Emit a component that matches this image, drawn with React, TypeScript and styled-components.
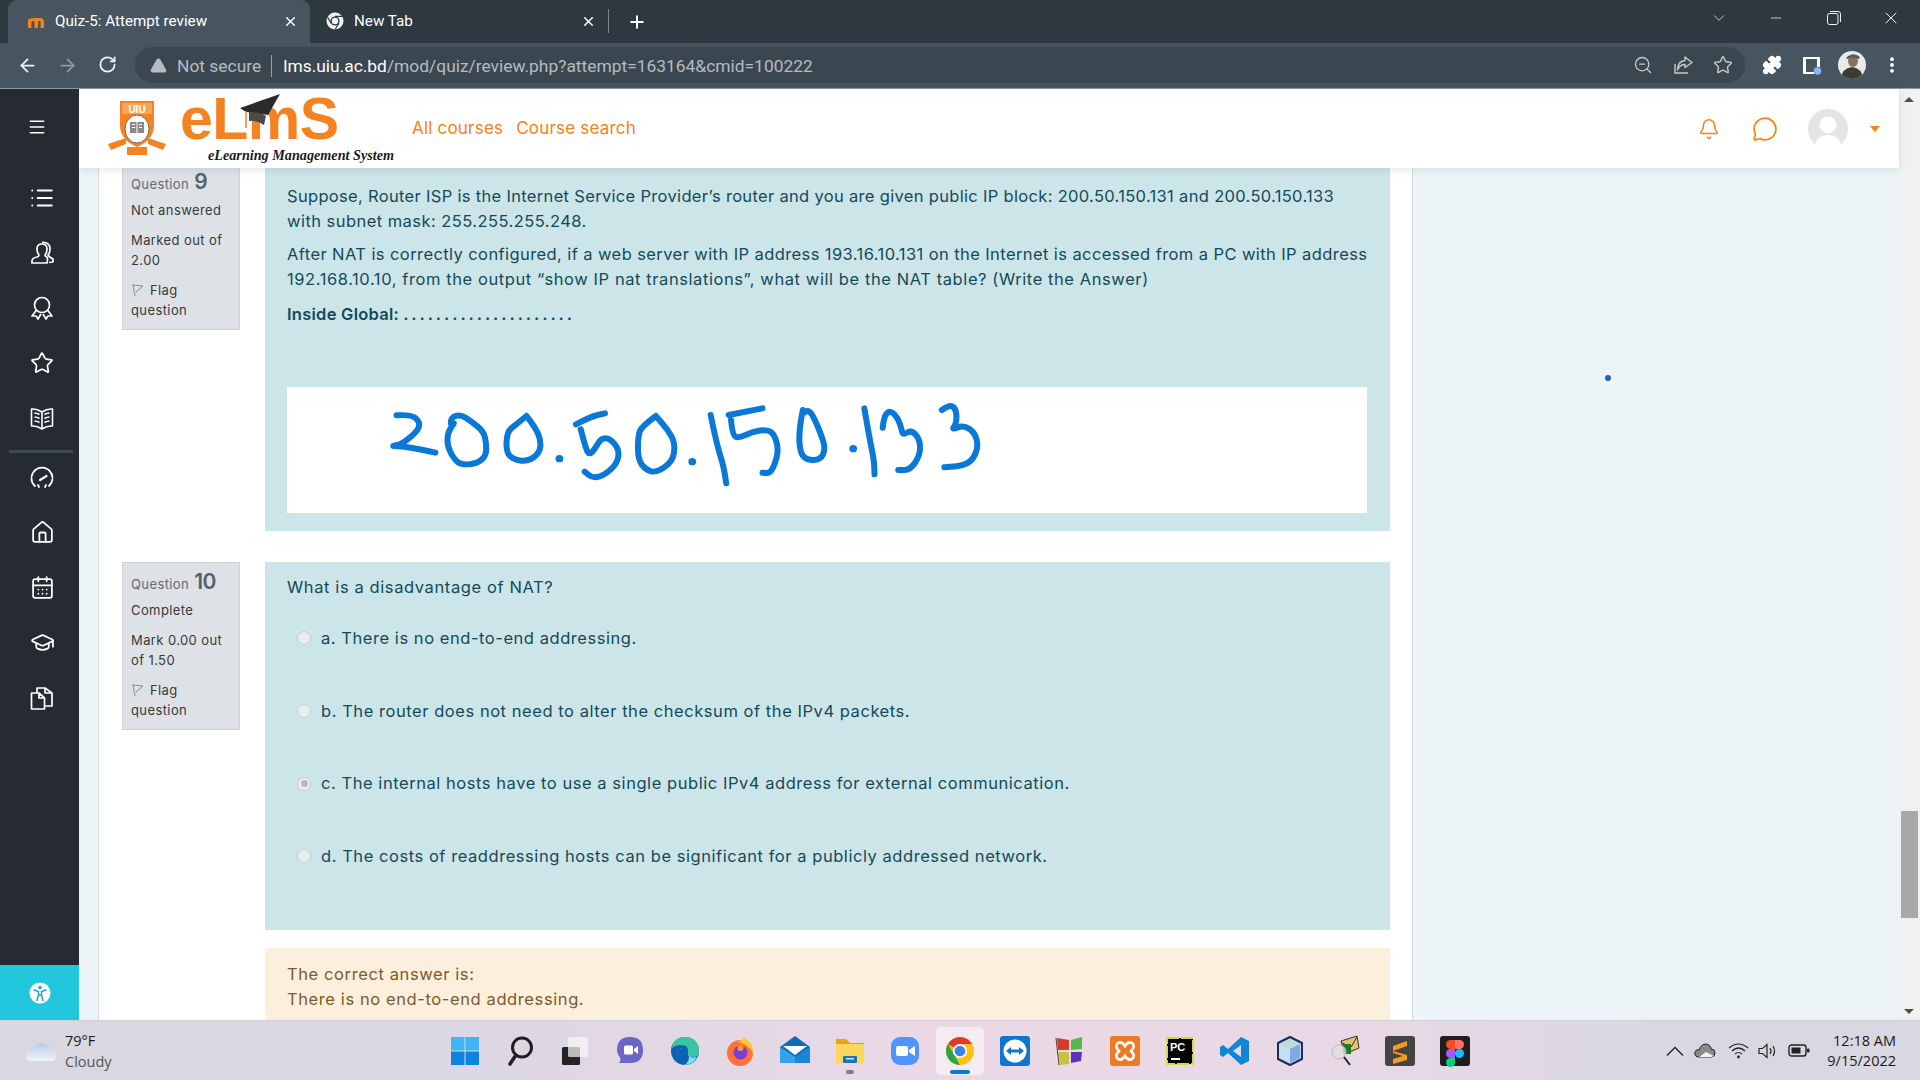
import styled, { createGlobalStyle } from 'styled-components';
import {
  ArrowLeft,
  ArrowRight,
  AlertTriangle,
  Bell,
  CalendarDays,
  ChevronDown,
  EllipsisVertical,
  GraduationCap,
  House,
  List,
  Menu,
  MessageCircle,
  Minus,
  Plus,
  Puzzle,
  RotateCw,
  Star,
  X,
  ZoomOut,
} from 'lucide-react';
import type { ReactNode } from 'react';

const GlobalStyle = createGlobalStyle`
  html, body { margin: 0; padding: 0; height: 100%; overflow: hidden; }
  * { box-sizing: border-box; }
  body { font-family: Inter, "Noto Sans", sans-serif; }
`;

const Screen = styled.div`
  width: 1920px;
  height: 1080px;
  display: flex;
  flex-direction: column;
  overflow: hidden;
`;

/* browser chrome */
const TabStrip = styled.div`
  height: 43px;
  background: #2e383f;
  display: flex;
  align-items: flex-end;
  padding-left: 8px;
  color: #fff;
  font: 15.2px Roboto, sans-serif;
`;

const Tab = styled.div<{ $active?: boolean }>`
  width: ${p => (p.$active ? 302 : 298)}px;
  height: 43px;
  border-radius: 9px 9px 0 0;
  background: ${p => (p.$active ? '#46555f' : 'transparent')};
  display: flex;
  align-items: center;
  padding: 0 0 1px ${p => (p.$active ? 19 : 16)}px;
  gap: 10px;
`;

const TabTitle = styled.span`
  flex: 1;
  white-space: nowrap;
`;

const TabClose = styled(X)`
  width: 15px;
  height: 15px;
  margin-right: 12px;
  stroke-width: 2.4;
`;

const TabDivider = styled.div`
  width: 1px;
  height: 24px;
  background: #7b868d;
  margin: 0 0 10px 0;
`;

const NewTab = styled(Plus)`
  width: 20px;
  height: 20px;
  margin: 0 0 11px 18px;
  stroke-width: 2.4;
`;

const WindowButtons = styled.div`
  margin-left: auto;
  height: 36px;
  align-self: flex-start;
  display: flex;
  align-items: center;
`;

const WindowButton = styled.div`
  width: 57.5px;
  display: flex;
  justify-content: center;
  color: #f1f3f4;
`;

const Toolbar = styled.div`
  height: 46px;
  background: #46555f;
  border-bottom: 1px solid #8b969c;
  display: flex;
  align-items: center;
  padding: 0 0 1px 0;
  color: #f1f3f4;
`;

const NavButton = styled.div<{ $dim?: boolean; $width: number }>`
  width: ${p => p.$width}px;
  display: flex;
  justify-content: center;
  color: ${p => (p.$dim ? '#8f9ba3' : '#f1f3f4')};
`;

const NavGroup = styled.div`
  width: 135px;
  display: flex;
  padding-left: 7px;
`;

const Omnibox = styled.div`
  width: 1610px;
  height: 36px;
  border-radius: 18px;
  background: #3a4750;
  display: flex;
  align-items: center;
  padding: 0 0 0 15px;
  font: 17.4px Roboto, sans-serif;
  white-space: nowrap;
`;

const OmniText = styled.div`
  display: flex;
  align-items: center;
  padding-top: 2px;
`;

const NotSecure = styled.span`
  color: #b4bcc2;
  margin-left: 10px;
`;

const OmniDivider = styled.div`
  width: 1px;
  height: 22px;
  background: #97a1a7;
  margin: 0 11px 0 10px;
`;

const Host = styled.span`
  color: #fff;
`;

const UrlPath = styled.span`
  color: #b4bcc2;
`;

const OmniActions = styled.div`
  margin-left: auto;
  display: flex;
  padding-right: 2px;
  color: #c4cacd;
`;

const OmniAction = styled.div`
  width: 40px;
  display: flex;
  justify-content: center;
`;

const ToolActions = styled.div`
  display: flex;
  align-items: center;
  padding-left: 7px;
`;

const ToolAction = styled.div`
  width: 40px;
  display: flex;
  justify-content: center;
  align-items: center;
  color: #fff;
`;

/* page */
const Body = styled.div`
  flex: 1;
  min-height: 0;
  display: flex;
`;

const Sidebar = styled.aside`
  width: 79px;
  background: #262b33;
  display: flex;
  flex-direction: column;
  color: #fff;
  flex: none;
`;

const Burger = styled.div`
  height: 81px;
  display: flex;
  align-items: center;
  padding: 0 0 6px 27px;
  flex: none;
`;

const SideItem = styled.div`
  height: 55px;
  display: flex;
  align-items: center;
  justify-content: center;
  padding-left: 5px;
  flex: none;
`;

const SideDivider = styled.div`
  height: 3px;
  margin: 5px 6px -3px 9px;
  background: #3b4a54;
  flex: none;
`;

const AccessButton = styled.div`
  margin-top: auto;
  height: 55px;
  background: #22c7dd;
  display: flex;
  align-items: center;
  justify-content: center;
`;

const Main = styled.div`
  flex: 1;
  min-width: 0;
  display: flex;
  flex-direction: column;
`;

const Header = styled.header`
  height: 79px;
  background: #fff;
  display: flex;
  align-items: center;
  padding-left: 28px;
  box-shadow: 0 2px 8px rgba(40, 60, 80, 0.12);
  position: relative;
  z-index: 2;
  flex: none;
`;

const LogoBlock = styled.div`
  width: 305px;
  height: 79px;
  display: flex;
  position: relative;
  flex: none;
`;

const Emblem = styled.div`
  width: 73px;
  padding-top: 11px;
  flex: none;
`;

const LogoText = styled.div`
  display: flex;
  flex-direction: column;
`;

const Wordmark = styled.div`
  font: 700 59px/1 "Liberation Sans", sans-serif;
  color: #f58220;
  height: 58px;
  margin-top: 1px;
  letter-spacing: -0.5px;
`;

const Tagline = styled.div`
  font: italic 700 14.2px/1 "Liberation Serif", serif;
  color: #1a1a1a;
  margin: 0 0 0 28px;
  white-space: nowrap;
`;

const CapMark = styled.svg`
  position: absolute;
  left: 131px;
  top: 5px;
`;

const NavLinks = styled.nav`
  display: flex;
  gap: 13px;
  font-size: 17px;
  letter-spacing: 0.2px;
  color: #f98012;
  padding-bottom: 1px;
`;

const HeaderActions = styled.div`
  margin-left: auto;
  display: flex;
  align-items: center;
  color: #f98012;
  padding-right: 19px;
`;

const HeaderIcon = styled.div<{ $width: number }>`
  width: ${p => p.$width}px;
  display: flex;
  justify-content: center;
`;

const Caret = styled.div`
  width: 0;
  height: 0;
  margin-left: 7px;
  border-left: 5px solid transparent;
  border-right: 5px solid transparent;
  border-top: 6px solid #f98012;
`;

const Viewport = styled.div`
  flex: 1;
  min-height: 0;
  display: flex;
  overflow: hidden;
`;

const PageBg = styled.div`
  flex: 1;
  min-width: 0;
  background: #ecf4f7;
  padding-left: 19px;
  position: relative;
  overflow: hidden;
`;

const PointerDot = styled.div`
  position: absolute;
  left: 1526px;
  top: 207px;
  width: 6px;
  height: 6px;
  border-radius: 50%;
  background: #1565c0;
`;

const Card = styled.div`
  width: 1315px;
  min-height: 100%;
  background: #fff;
  border-left: 1px solid #d5dde2;
  border-right: 1px solid #d5dde2;
  padding: 0 22px 0 23px;
  margin-top: -6px;
`;

const Question = styled.section`
  display: flex;
  gap: 25px;
  margin-bottom: 31px;
  align-items: flex-start;
`;

const Info = styled.div`
  width: 118px;
  flex: none;
  background: #dee2e6;
  border: 1px solid #ced4da;
  padding: 9px 8px 9px 8px;
  font-size: 13px;
  line-height: 20px;
  letter-spacing: 0.4px;
  color: #373a3c;
`;

const QuestionNo = styled.div`
  display: flex;
  align-items: baseline;
  gap: 5px;
  color: #5f6b73;
  height: 24px;
  margin-bottom: 4px;
`;

const QuestionNumber = styled.span`
  font-size: 21px;
  font-weight: 600;
  color: #55606a;
  letter-spacing: -0.5px;
`;

const InfoLine = styled.div`
  margin-bottom: 10px;
`;

const FlagRow = styled.div`
  svg {
    margin: 0 6px -2px 0;
  }
`;

const Answers = styled.div`
  flex: 1;
  min-width: 0;
  display: flex;
  flex-direction: column;
  gap: 18px;
`;

const Formulation = styled.div<{ $top: number }>`
  background: #cce5e9;
  color: #144a58;
  padding: ${p => p.$top}px 23px 18px 22px;
  font-size: 16.5px;
  line-height: 25px;
`;

const Para = styled.div`
  margin: 0 0 8px;
`;

const TextLine = styled.div<{ $spacing: number }>`
  white-space: nowrap;
  letter-spacing: ${p => p.$spacing}px;
`;

const Strong = styled.div`
  margin: 10px 0 0;
  font-weight: 600;
  letter-spacing: 0.26px;
`;

const LeaderDots = styled.span`
  letter-spacing: -0.45px;
  margin-left: 4px;
`;

const Sketch = styled.div`
  margin-top: 60px;
  height: 126px;
  background: #fff;
`;

const Options = styled.div`
  margin-top: 2px;
  padding-bottom: 19px;
`;

const Option = styled.div`
  height: 72.7px;
  display: flex;
  align-items: center;
  padding-left: 10px;
  gap: 10px;
  letter-spacing: 0.55px;
`;

const Radio = styled.span<{ $checked?: boolean }>`
  width: 14px;
  height: 14px;
  border-radius: 50%;
  background: #e9eef0;
  border: 1px solid #c6cdd0;
  display: flex;
  align-items: center;
  justify-content: center;
  flex: none;
  &::after {
    content: '';
    width: 7px;
    height: 7px;
    border-radius: 50%;
    background: ${p => (p.$checked ? '#b5bdc0' : 'transparent')};
  }
`;

const Outcome = styled.div`
  background: #fcefdc;
  color: #7d5a29;
  padding: 14px 22px 40px;
  font-size: 16.5px;
  line-height: 25px;
  letter-spacing: 0.6px;
`;

const Scrollbar = styled.div`
  width: 21px;
  background: #f1f1f1;
  flex: none;
  position: relative;
`;

const ScrollArrow = styled.div<{ $down?: boolean }>`
  position: absolute;
  left: 5px;
  ${p => (p.$down ? 'bottom: 6px;' : 'top: 8px;')}
  width: 0;
  height: 0;
  border-left: 5px solid transparent;
  border-right: 5px solid transparent;
  ${p => (p.$down ? 'border-top: 5px solid #505050;' : 'border-bottom: 5px solid #505050;')}
`;

const ScrollThumb = styled.div`
  position: absolute;
  left: 2px;
  top: 722px;
  width: 17px;
  height: 107px;
  background: #a8a8a8;
`;

/* taskbar */
const Taskbar = styled.footer`
  height: 60px;
  flex: none;
  display: grid;
  grid-template-columns: 1fr auto 1fr;
  align-items: center;
  background: linear-gradient(90deg, #d9d7df 0%, #dcd7e3 25%, #ebd8e5 50%, #e8d8e5 72%, #d9d8e2 86%, #d9d8e2 100%);
  border-top: 1px solid #d2d0d8;
  color: #1a1a1a;
  font: 14.5px "Open Sans", sans-serif;
`;

const Weather = styled.div`
  display: flex;
  align-items: center;
  gap: 8px;
  padding-left: 25px;
  line-height: 21px;
`;

const WeatherState = styled.div`
  color: #555;
`;

const TaskIcons = styled.div`
  display: flex;
`;

const TaskSlot = styled.div<{ $active?: boolean }>`
  width: 55px;
  height: 48px;
  display: flex;
  align-items: center;
  justify-content: center;
  position: relative;
  &::before {
    content: '';
    position: absolute;
    left: 3.5px;
    right: 3.5px;
    top: 0;
    bottom: 0;
    border-radius: 5px;
    background: ${p => (p.$active ? 'rgba(255, 255, 255, 0.5)' : 'transparent')};
  }
  svg {
    position: relative;
  }
`;

const RunDot = styled.span<{ $active?: boolean }>`
  position: absolute;
  bottom: 1px;
  left: 50%;
  transform: translateX(-50%);
  height: 4px;
  border-radius: 2px;
  width: ${p => (p.$active ? 20 : 8)}px;
  background: ${p => (p.$active ? '#0a78d4' : '#7d7a80')};
`;

const Tray = styled.div`
  display: flex;
  align-items: center;
  justify-content: flex-end;
  padding-right: 24px;
`;

const TrayIcon = styled.div<{ $width: number }>`
  width: ${p => p.$width}px;
  display: flex;
  justify-content: center;
`;

const Clock = styled.div`
  width: 78px;
  text-align: right;
  line-height: 20px;
  white-space: nowrap;
`;

/* hand written answer, coordinates follow the pen strokes */
const strokes: number[][][] = [
  [[240, 106], [270, 103], [288, 125], [285, 150], [262, 180], [245, 195], [228, 198], [255, 200], [290, 208], [320, 218]],
  [[352, 130], [352, 112], [372, 103], [395, 125], [420, 155], [425, 190], [425, 225], [408, 250], [375, 255], [360, 240], [345, 200], [345, 160], [358, 130]],
  [[508, 108], [485, 135], [468, 155], [466, 215], [480, 238], [510, 245], [535, 220], [538, 180], [525, 140], [508, 108]],
  [[610, 133], [640, 110], [670, 100]],
  [[620, 148], [630, 205], [638, 225], [650, 205], [662, 175], [680, 175], [700, 210], [695, 250], [670, 285], [645, 295], [628, 275]],
  [[775, 108], [745, 140], [738, 170], [738, 240], [755, 270], [775, 278], [810, 245], [815, 190], [800, 150], [775, 108]],
  [[888, 105], [900, 190], [915, 260], [920, 310]],
  [[925, 105], [995, 85]],
  [[930, 120], [933, 165], [945, 175], [975, 155], [1005, 148], [1020, 165], [1028, 210], [1020, 255], [1010, 280], [995, 278]],
  [[1078, 90], [1070, 150], [1072, 215], [1085, 240], [1115, 240], [1125, 205], [1115, 160], [1100, 110], [1090, 90], [1078, 100]],
  [[1205, 85], [1215, 170], [1225, 240], [1226, 283]],
  [[1243, 143], [1245, 110], [1258, 90], [1275, 115], [1282, 150], [1285, 165], [1303, 150], [1320, 180], [1320, 225], [1300, 270], [1275, 270]],
  [[1365, 90], [1382, 72], [1395, 90], [1395, 130], [1385, 150], [1410, 135], [1435, 160], [1440, 210], [1420, 255], [1370, 262]],
];
const penDots = [[576, 236], [850, 245], [1182, 206]];

const smooth = (pts: number[][]) => {
  let d = `M${pts[0][0]} ${pts[0][1]}`;
  for (let i = 1; i < pts.length - 1; i++) {
    const mx = (pts[i][0] + pts[i + 1][0]) / 2;
    const my = (pts[i][1] + pts[i + 1][1]) / 2;
    d += ` Q${pts[i][0]} ${pts[i][1]} ${mx} ${my}`;
  }
  const last = pts[pts.length - 1];
  return `${d} L${last[0]} ${last[1]}`;
};

const HandWriting = () => (
  <svg width="1080" height="126" viewBox="14 21 2228 378" preserveAspectRatio="none">
    <g fill="none" stroke="#0a78d7" strokeLinecap="round" strokeLinejoin="round">
      {strokes.map((pts, i) => (
        <path key={i} d={smooth(pts)} strokeWidth="6" vectorEffect="non-scaling-stroke" />
      ))}
    </g>
    {penDots.map(([x, y]) => (
      <ellipse key={x} cx={x} cy={y} rx="8" ry="11" fill="#0a78d7" />
    ))}
  </svg>
);

/* small drawings */
const Cap = () => (
  <CapMark width="46" height="36" viewBox="0 0 46 36">
    <path d="M2 14 L42 0 L30 21 Q18 19 8 18 Z" fill="#2b2b2b" />
    <path d="M11 18 Q22 18 28 22 L26 31 Q18 26 11 27 Z" fill="#4a4a4a" />
    <path d="M8 17 L8 34" stroke="#f58220" strokeWidth="1.5" />
  </CapMark>
);

const Shield = () => (
  <svg width="60" height="56" viewBox="0 0 60 56">
    <path d="M13 1 H47 V25 Q47 40 30 47 Q13 40 13 25 Z" fill="#f58220" />
    <rect x="15" y="3" width="30" height="11" fill="#f9a65a" />
    <text x="30" y="12.5" textAnchor="middle" fontFamily="Liberation Sans" fontWeight="700" fontSize="10" fill="#fff">UIU</text>
    <ellipse cx="30" cy="29" rx="12" ry="14" fill="#fff" stroke="#7d6a50" />
    <rect x="23" y="22" width="14" height="11" fill="#8a8a8a" />
    <path d="M30 22 V33 M25 24.5 H28 M25 27.5 H28 M32 24.5 H35 M32 27.5 H35" stroke="#fff" />
    <path d="M1 44 L19 38 L19 44 L4 50 Z M59 44 L41 38 L41 44 L56 50 Z" fill="#f58220" />
    <rect x="20" y="47" width="20" height="8" fill="#f58220" />
  </svg>
);

const MoodleFav = () => (
  <svg width="18" height="16" viewBox="0 0 18 16">
    <path d="M1 15 V8 Q1 5 4 5 H13 Q17 5 17 9 V15 H13.5 V9 Q13.5 8 12.5 8 Q11 8 11 9 V15 H7.5 V9 Q7.5 8 6.5 8 Q4.5 8 4.5 9 V15 Z" fill="#f98012" />
    <path d="M0 6 L8 1 L9 5 Z" fill="#555" />
  </svg>
);

const ChromeMono = () => (
  <svg width="18" height="18" viewBox="0 0 18 18">
    <circle cx="9" cy="9" r="8.5" fill="#f1f3f4" />
    <circle cx="9" cy="9" r="4.6" fill="#2e383f" />
    <circle cx="9" cy="9" r="3.2" fill="#f1f3f4" />
    <path d="M9 4.4 H17 M5 11.2 L1.5 5 M13 11.2 L9 17.5" stroke="#2e383f" strokeWidth="1.2" />
  </svg>
);

const Restore = () => (
  <svg width="14" height="14" viewBox="0 0 14 14" fill="none" stroke="currentColor" strokeWidth="1">
    <rect x="0.5" y="2.5" width="10.5" height="11" rx="2" />
    <path d="M3 .5 H11 Q13.5 .5 13.5 3 V11" />
  </svg>
);

const ShareBox = () => (
  <svg width="20" height="20" viewBox="0 0 20 20" fill="none" stroke="currentColor" strokeWidth="1.4">
    <path d="M2 9 V18 H15" />
    <path d="M12 2 L19 7.5 L12 12.5 V9.5 Q7 9.5 4.5 15 Q5 6 12 5.5 Z" strokeLinejoin="round" />
  </svg>
);

const SidePanel = () => (
  <svg width="20" height="20" viewBox="0 0 20 20">
    <path d="M1 2 H18 V12 H15 V4 H4 V17 H12 V19 H1 Z" fill="#fff" />
    <path d="M15 2 H18 V12 H15 Z" fill="#fff" />
    <circle cx="15.5" cy="16" r="3.8" fill="#8ab4f8" />
  </svg>
);

const ProfilePhoto = () => (
  <svg width="28" height="28" viewBox="0 0 28 28">
    <defs>
      <clipPath id="profile-clip">
        <circle cx="14" cy="14" r="14" />
      </clipPath>
    </defs>
    <g clipPath="url(#profile-clip)">
      <rect width="28" height="28" fill="#e9eaea" />
      <path d="M3 28 Q4 17 14 16 Q24 17 25 28 Z" fill="#3a3b33" />
      <ellipse cx="15" cy="10" rx="5" ry="6" fill="#8c6d5e" />
      <path d="M8 7 Q15 0 22 6 L21 8 Q15 5 9 8 Z" fill="#525a66" />
    </g>
  </svg>
);

const UserAvatar = () => (
  <svg width="40" height="40" viewBox="0 0 40 40">
    <circle cx="20" cy="20" r="20" fill="#e4e4e4" />
    <circle cx="20" cy="16" r="8.5" fill="#fff" />
    <path d="M6 40 Q8 26 20 26 Q32 26 34 40 Z" fill="#fff" />
  </svg>
);

const Friends = () => (
  <svg width="24" height="24" viewBox="0 0 24 24" fill="none" stroke="currentColor" strokeWidth="1.7" strokeLinejoin="round">
    <path d="M2 22 V20 Q2 17 7 16 Q9 15.5 9 14 Q7 12 7 8 Q7 3 12 3 Q17 3 17 8 Q17 12 15 14 Q15 15.5 17 16 Q18 18 17 22 Z" />
    <path d="M12 1.5 Q20 1 20 8 Q20 12 18 14 Q19 16 23 18 V21 L19 21.5" />
  </svg>
);

const Ribbon = () => (
  <svg width="24" height="24" viewBox="0 0 24 24" fill="none" stroke="currentColor" strokeWidth="1.7" strokeLinejoin="round">
    <circle cx="12" cy="9" r="7.5" />
    <path d="M6.5 14 L2 20 H6 L8 23 L11 18 M17.5 14 L22 20 H18 L16 23 L13 18" />
  </svg>
);

const BookLines = () => (
  <svg width="24" height="24" viewBox="0 0 24 24" fill="none" stroke="currentColor" strokeWidth="1.6" strokeLinejoin="round">
    <path d="M12 6 Q7 2.5 1.5 3 V20 Q7 19.5 12 23 Q17 19.5 22.5 20 V3 Q17 2.5 12 6 Z M12 6 V23" />
    <path d="M4.5 7 Q7 7 9.5 8.5 M4.5 11 Q7 11 9.5 12.5 M4.5 15 Q7 15 9.5 16.5 M19.5 7 Q17 7 14.5 8.5 M19.5 11 Q17 11 14.5 12.5 M19.5 15 Q17 15 14.5 16.5" />
  </svg>
);

const Speedo = () => (
  <svg width="24" height="24" viewBox="0 0 24 24" fill="none" stroke="currentColor" strokeWidth="1.8" strokeLinecap="round">
    <path d="M5 20 A10.5 10.5 0 1 1 19 20" strokeDasharray="9 1.6" />
    <path d="M9 21 L8 19 M15 21 L16 19" />
    <path d="M10 14 L16.5 10" strokeWidth="2.2" />
  </svg>
);

const Docs = () => (
  <svg width="24" height="24" viewBox="0 0 24 24" fill="none" stroke="currentColor" strokeWidth="1.7" strokeLinejoin="round">
    <path d="M1.5 7 H9 L14.5 12 V23 H1.5 Z M9 7 V12 H14.5" />
    <path d="M7 7 V2 H15 L22 7 V20 H15 M15 2 V7 H22" />
  </svg>
);

const Access = () => (
  <svg width="22" height="22" viewBox="0 0 22 22">
    <circle cx="11" cy="11" r="10.5" fill="#fff" />
    <circle cx="11" cy="5.5" r="1.8" fill="#22a5c6" />
    <path d="M5 8 L9.5 9.5 V13 L8 18.5 M17 8 L12.5 9.5 V13 L14 18.5 M9.5 13 H12.5" fill="none" stroke="#22a5c6" strokeWidth="1.5" strokeLinecap="round" />
  </svg>
);

const Flag = () => (
  <svg width="13" height="13" viewBox="0 0 13 13" fill="none" stroke="#8b8f92" strokeWidth="1">
    <path d="M2 1 L4 12 M1 1 L12 2 L5 8" />
  </svg>
);

const CloudIcon = () => (
  <svg width="32" height="24" viewBox="0 0 32 24">
    <defs>
      <linearGradient id="weather-cloud" x1="0" x2="0" y1="0" y2="1">
        <stop offset="0" stopColor="#b9cbe8" />
        <stop offset="1" stopColor="#eef2fa" />
      </linearGradient>
    </defs>
    <path d="M7 22 Q0 22 1 16 Q2 11 8 12 Q10 3 18 4 Q24 5 25 11 Q31 11 31 17 Q31 22 26 22 Z" fill="url(#weather-cloud)" />
  </svg>
);

/* taskbar app marks, 32 unit box */
const Mark = ({ children }: { children: ReactNode }) => (
  <svg width="32" height="32" viewBox="0 0 32 32">{children}</svg>
);

const apps: { id: string; dot?: 'run' | 'active'; art: ReactNode }[] = [
  { id: 'start', art: <Mark><path d="M2 2 H15.5 V15.5 H2 Z M16.5 2 H30 V15.5 H16.5 Z" fill="#3fb6f2" /><path d="M2 16.5 H15.5 V30 H2 Z M16.5 16.5 H30 V30 H16.5 Z" fill="#0a84dc" /></Mark> },
  { id: 'search', art: <Mark><circle cx="18" cy="12.5" r="9.5" fill="none" stroke="#202020" strokeWidth="3" /><path d="M12 20 L6 29" stroke="#202020" strokeWidth="3.5" strokeLinecap="round" /></Mark> },
  { id: 'view', art: <Mark><rect x="3" y="12" width="18" height="18" rx="1.5" fill="#242424" /><rect x="9" y="2" width="20" height="20" rx="1.5" fill="#f6f6f6" fillOpacity="0.72" /></Mark> },
  { id: 'chat', art: <Mark><path d="M16 2 Q29 2 29 15 Q29 28 16 28 H5 Q8 25 5 21 Q3 18 3 15 Q3 2 16 2 Z" fill="#6a66c4" /><rect x="10" y="10.5" width="9" height="9" rx="1.5" fill="#fff" /><path d="M20 14 L24 11 V19 L20 16 Z" fill="#fff" /></Mark> },
  { id: 'edge', art: <Mark><circle cx="16" cy="16" r="14" fill="#0c62b2" /><path d="M2.5 14 Q5 2 16 2 Q29 2 30 16 Q30 22 24 22 Q18 22 19 17 Q20 10 12 10 Q5 10 2.5 14 Z" fill="#37c6a0" /><path d="M19 17 Q19 24 28 22 Q24 30 15 30 Q22 27 19 17 Z" fill="#7fdcf0" /><path d="M10 24 Q5 15 13 13 Q6 15 9 22 Z" fill="#fff" /></Mark> },
  { id: 'firefox', art: <Mark><circle cx="16" cy="18" r="13" fill="#ff7139" /><path d="M10 6 Q16 8 20 2 Q30 8 29 18 Q24 8 10 6 Z" fill="#ffcb2e" /><circle cx="16.5" cy="17.5" r="7" fill="#7a3ed0" /><circle cx="16.5" cy="13" r="3" fill="#ff9a3c" /></Mark> },
  { id: 'mail', art: <Mark><path d="M1 12 L16 1 L31 12 V28 H1 Z" fill="#0f6cbd" /><path d="M4 11 H28 L16 20 Z" fill="#fff" /><path d="M1 12 L16 22 V28 H1 Z" fill="#35a3ea" /><path d="M31 12 L16 22 V28 H31 Z" fill="#1a86d8" /></Mark> },
  { id: 'files', dot: 'run', art: <Mark><path d="M2 4 H12 L16 8 H30 V28 H2 Z" fill="#e6a40e" /><path d="M2 9 H30 V28 H2 Z" fill="#ffd65c" /><rect x="9" y="21" width="14" height="7" rx="1" fill="#1474c4" /><rect x="12" y="23" width="8" height="1.5" fill="#cfe6fa" /></Mark> },
  { id: 'zoom', art: <Mark><rect x="2" y="2" width="28" height="28" rx="9" fill="#4f94f6" /><rect x="7" y="11" width="12" height="10" rx="2" fill="#fff" /><path d="M20 15 L26 11 V21 L20 17 Z" fill="#fff" /></Mark> },
  { id: 'chrome', dot: 'active', art: <Mark><circle cx="16" cy="16" r="14" fill="#fbc116" /><path d="M3.9 9 A14 14 0 0 1 28.1 9 H16 A7 7 0 0 0 9.9 12.5 Z" fill="#df3a2e" /><path d="M3.9 9 L10 19.5 L16 30 A14 14 0 0 1 3.9 9 Z" fill="#2ca34a" /><circle cx="16" cy="16" r="7" fill="#fff" /><circle cx="16" cy="16" r="5.3" fill="#3d7ef0" /></Mark> },
  { id: 'teamviewer', art: <Mark><rect x="1" y="1" width="30" height="30" rx="3" fill="#0e75d0" /><circle cx="16" cy="16" r="11.5" fill="#fff" /><path d="M7 16 L12 12 V14.5 H20 V12 L25 16 L20 20 V17.5 H12 V20 Z" fill="#0e75d0" /></Mark> },
  { id: 'store', art: <Mark><path d="M3 3 L15 5 V15 L4 15 Z" fill="#d7392b" /><path d="M17 5 L28 2 L28 14 L17 15 Z" fill="#54b84a" /><path d="M4 17 H15 V29 L6 30 Z" fill="#c9c33a" /><path d="M17 17 H28 L27 26 L17 28 Z" fill="#5b2fc0" /><path d="M2 3 L5 30" stroke="#444" strokeWidth="1" /></Mark> },
  { id: 'xampp', art: <Mark><rect x="1" y="1" width="30" height="30" rx="3" fill="#ee7a24" /><path d="M9 8 Q13 6 16 11 Q19 6 23 8 Q27 11 22 16 Q27 21 23 24 Q19 26 16 21 Q13 26 9 24 Q5 21 10 16 Q5 11 9 8 Z" fill="none" stroke="#fff" strokeWidth="2.6" /></Mark> },
  { id: 'pycharm', art: <Mark><rect x="3" y="3" width="26" height="26" fill="#000" stroke="#cddc39" strokeWidth="2" strokeDasharray="12 2" /><text x="6" y="16" fontFamily="Liberation Sans" fontWeight="700" fontSize="11" fill="#fff">PC</text><rect x="7" y="23" width="9" height="2" fill="#fff" /></Mark> },
  { id: 'vscode', art: <Mark><path d="M22 2 L30 6 V26 L22 30 L9 18 L4 22 L1 20 V12 L4 10 L9 14 Z M22 10 L14 16 L22 22 Z" fill="#0f86d6" /></Mark> },
  { id: 'cube', art: <Mark><path d="M16 2 L28 8 V24 L16 30 L4 24 V8 Z" fill="#c6def2" stroke="#1f2a5c" strokeWidth="2" strokeLinejoin="round" /><path d="M6 9 L16 14 L26 9 L16 4 Z" fill="#b9ded8" /><path d="M16 14 V28 L26 23 V9 Z" fill="#7ca9e0" /></Mark> },
  { id: 'sniffer', art: <Mark><path d="M12 6 L28 1 L30 13 L16 19 Z" fill="#e8c06a" stroke="#333" /><path d="M13 8 L22 12 L28 2" fill="none" stroke="#333" /><rect x="14" y="9" width="8" height="10" fill="#1a7a2e" /><circle cx="10" cy="17" r="7" fill="#dedede" fillOpacity="0.8" stroke="#bbb" /><path d="M15 22 L21 30" stroke="#222" strokeWidth="2" /></Mark> },
  { id: 'sublime', art: <Mark><rect x="1" y="1" width="30" height="30" rx="3" fill="#444" /><path d="M23 6 V11 L9 16 V11 Z M9 16 L23 20 V25 L9 29 V24 L19 21 L9 18 Z" fill="#f89a1c" /></Mark> },
  { id: 'figma', art: <Mark><rect x="1" y="1" width="30" height="30" rx="3" fill="#1e1e1e" /><path d="M16 5 H11.5 A4.5 4.5 0 0 0 11.5 14 H16 Z" fill="#f24e1e" /><path d="M16 5 H20.5 A4.5 4.5 0 0 1 20.5 14 H16 Z" fill="#ff7262" /><path d="M16 14 H11.5 A4.5 4.5 0 0 0 11.5 23 H16 Z" fill="#a259ff" /><circle cx="20.5" cy="18.5" r="4.5" fill="#1abcfe" /><path d="M11.5 23 H16 V27.5 A4.5 4.5 0 1 1 11.5 23 Z" fill="#0acf83" /></Mark> },
];

const InfoBox = ({ n, state, mark }: { n: number; state: string; mark: string }) => (
  <Info>
    <QuestionNo>
      Question <QuestionNumber>{n}</QuestionNumber>
    </QuestionNo>
    <InfoLine>{state}</InfoLine>
    <InfoLine>{mark}</InfoLine>
    <FlagRow>
      <Flag />
      Flag question
    </FlagRow>
  </Info>
);

const answers = [
  'a. There is no end-to-end addressing.',
  'b. The router does not need to alter the checksum of the IPv4 packets.',
  'c. The internal hosts have to use a single public IPv4 address for external communication.',
  'd. The costs of readdressing hosts can be significant for a publicly addressed network.',
];

export default function App() {
  return (
    <Screen>
      <GlobalStyle />
      <TabStrip>
        <Tab $active>
          <MoodleFav />
          <TabTitle>Quiz-5: Attempt review</TabTitle>
          <TabClose />
        </Tab>
        <Tab>
          <ChromeMono />
          <TabTitle>New Tab</TabTitle>
          <TabClose />
        </Tab>
        <TabDivider />
        <NewTab />
        <WindowButtons>
          <WindowButton><ChevronDown size={18} strokeWidth={1} /></WindowButton>
          <WindowButton><Minus size={16} strokeWidth={1.2} /></WindowButton>
          <WindowButton><Restore /></WindowButton>
          <WindowButton><X size={20} strokeWidth={1.2} /></WindowButton>
        </WindowButtons>
      </TabStrip>
      <Toolbar>
        <NavGroup>
          <NavButton $width={40}><ArrowLeft size={21} /></NavButton>
          <NavButton $width={41} $dim><ArrowRight size={21} /></NavButton>
          <NavButton $width={39}><RotateCw size={19} strokeWidth={2.2} /></NavButton>
        </NavGroup>
        <Omnibox>
          <AlertTriangle size={17} fill="#b4bcc2" color="#b4bcc2" />
          <OmniText>
            <NotSecure>Not secure</NotSecure>
            <OmniDivider />
            <Host>lms.uiu.ac.bd</Host>
            <UrlPath>/mod/quiz/review.php?attempt=163164&amp;cmid=100222</UrlPath>
          </OmniText>
          <OmniActions>
            <OmniAction><ZoomOut size={20} strokeWidth={1.6} /></OmniAction>
            <OmniAction><ShareBox /></OmniAction>
            <OmniAction><Star size={20} strokeWidth={1.7} /></OmniAction>
          </OmniActions>
        </Omnibox>
        <ToolActions>
          <ToolAction><Puzzle size={20} fill="#fff" /></ToolAction>
          <ToolAction><SidePanel /></ToolAction>
          <ToolAction><ProfilePhoto /></ToolAction>
          <ToolAction><EllipsisVertical size={20} strokeWidth={2.6} /></ToolAction>
        </ToolActions>
      </Toolbar>
      <Body>
        <Sidebar>
          <Burger><Menu size={20} strokeWidth={1.8} /></Burger>
          <SideItem><List size={26} strokeWidth={1.8} /></SideItem>
          <SideItem><Friends /></SideItem>
          <SideItem><Ribbon /></SideItem>
          <SideItem><Star size={24} strokeWidth={1.7} /></SideItem>
          <SideItem><BookLines /></SideItem>
          <SideDivider />
          <SideItem><Speedo /></SideItem>
          <SideItem><House size={25} strokeWidth={1.7} /></SideItem>
          <SideItem><CalendarDays size={25} strokeWidth={1.7} /></SideItem>
          <SideItem><GraduationCap size={25} strokeWidth={1.7} /></SideItem>
          <SideItem><Docs /></SideItem>
          <AccessButton><Access /></AccessButton>
        </Sidebar>
        <Main>
          <Header>
            <LogoBlock>
              <Emblem><Shield /></Emblem>
              <LogoText>
                <Wordmark>eLmS</Wordmark>
                <Tagline>eLearning Management System</Tagline>
              </LogoText>
              <Cap />
            </LogoBlock>
            <NavLinks>
              <span>All courses</span>
              <span>Course search</span>
            </NavLinks>
            <HeaderActions>
              <HeaderIcon $width={56}><Bell size={22} strokeWidth={1.7} /></HeaderIcon>
              <HeaderIcon $width={56}><MessageCircle size={26} strokeWidth={1.6} /></HeaderIcon>
              <HeaderIcon $width={70}><UserAvatar /></HeaderIcon>
              <Caret />
            </HeaderActions>
          </Header>
          <Viewport>
            <PageBg>
              <Card>
                <Question>
                  <InfoBox n={9} state="Not answered" mark="Marked out of 2.00" />
                  <Answers>
                    <Formulation $top={22}>
                      <Para>
                        <TextLine $spacing={0.32}>Suppose, Router ISP is the Internet Service Provider’s router and you are given public IP block: 200.50.150.131 and 200.50.150.133</TextLine>
                        <TextLine $spacing={0.45}>with subnet mask: 255.255.255.248.</TextLine>
                      </Para>
                      <Para>
                        <TextLine $spacing={0.41}>After NAT is correctly configured, if a web server with IP address 193.16.10.131 on the Internet is accessed from a PC with IP address</TextLine>
                        <TextLine $spacing={0.58}>192.168.10.10, from the output “show IP nat translations”, what will be the NAT table? (Write the Answer)</TextLine>
                      </Para>
                      <Strong>Inside Global:<LeaderDots>. . . . . . . . . . . . . . . . . . . . .</LeaderDots></Strong>
                      <Sketch><HandWriting /></Sketch>
                    </Formulation>
                  </Answers>
                </Question>
                <Question>
                  <InfoBox n={10} state="Complete" mark="Mark 0.00 out of 1.50" />
                  <Answers>
                    <Formulation $top={13}>
                      <TextLine $spacing={0.6}>What is a disadvantage of NAT?</TextLine>
                      <Options>
                        {answers.map((a, i) => (
                          <Option key={a}>
                            <Radio $checked={i === 2} />
                            {a}
                          </Option>
                        ))}
                      </Options>
                    </Formulation>
                    <Outcome>
                      The correct answer is:
                      <br />
                      There is no end-to-end addressing.
                    </Outcome>
                  </Answers>
                </Question>
              </Card>
              <PointerDot />
            </PageBg>
          </Viewport>
        </Main>
        <Scrollbar>
          <ScrollArrow />
          <ScrollThumb />
          <ScrollArrow $down />
        </Scrollbar>
      </Body>
      <Taskbar>
        <Weather>
          <CloudIcon />
          <div>
            <div>79°F</div>
            <WeatherState>Cloudy</WeatherState>
          </div>
        </Weather>
        <TaskIcons>
          {apps.map(app => (
            <TaskSlot key={app.id} $active={app.dot === 'active'}>
              {app.art}
              {app.dot && <RunDot $active={app.dot === 'active'} />}
            </TaskSlot>
          ))}
        </TaskIcons>
        <Tray>
          <TrayIcon $width={30}>
            <svg width="18" height="10" viewBox="0 0 18 10" fill="none" stroke="#222" strokeWidth="1.3"><path d="M1 9.5 L9 1.5 L17 9.5" /></svg>
          </TrayIcon>
          <TrayIcon $width={30}>
            <svg width="22" height="15" viewBox="0 0 22 15"><path d="M5 14 Q0 14 1 9 Q2 6 5 7 Q7 1 12 1 Q17 2 17 6 Q21 6 21 10 Q21 14 17 14 Z" fill="#8a8a8a" stroke="#222" /><path d="M5 14 L12 9 L20 13 L17 14 Z" fill="#f2f2f2" /></svg>
          </TrayIcon>
          <TrayIcon $width={36}>
            <svg width="21" height="16" viewBox="0 0 21 16" fill="none" stroke="#222" strokeWidth="1.2"><path d="M1 5 Q10.5 -3 20 5 M4 8 Q10.5 2 17 8 M7 11 Q10.5 8 14 11" /><circle cx="10.5" cy="14" r="1.4" fill="#222" stroke="none" /></svg>
          </TrayIcon>
          <TrayIcon $width={24}>
            <svg width="20" height="16" viewBox="0 0 20 16" fill="none" stroke="#222" strokeWidth="1.2"><path d="M1 5.5 H4.5 L9 1.5 V14.5 L4.5 10.5 H1 Z" /><path d="M12 5 Q14 8 12 11 M15 3 Q18 8 15 13" /></svg>
          </TrayIcon>
          <TrayIcon $width={38}>
            <svg width="22" height="13" viewBox="0 0 22 13"><rect x="1" y="1" width="17" height="11" rx="2.5" fill="none" stroke="#222" strokeWidth="1.4" /><rect x="3.5" y="3.5" width="9" height="6" fill="#222" /><rect x="19" y="4.5" width="2.5" height="4" rx="1" fill="#222" /></svg>
          </TrayIcon>
          <Clock>
            12:18 AM
            <br />
            9/15/2022
          </Clock>
        </Tray>
      </Taskbar>
    </Screen>
  );
}
